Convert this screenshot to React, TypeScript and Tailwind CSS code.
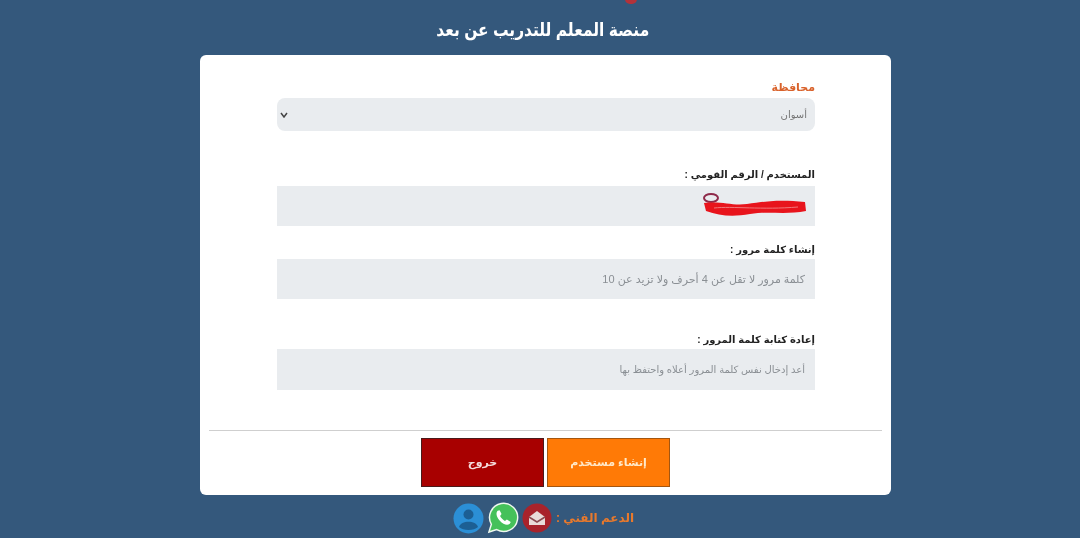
const fontStack = { fontFamily: '"Liberation Sans", "DejaVu Sans", sans-serif' };

const Field = ({
  label,
  hint,
  className,
  hintClass,
}: {
  label: string;
  hint?: string;
  className: string;
  hintClass: string;
}) => (
  <div className={className}>
    <label className="block h-[18px] text-[10px] leading-[17px] font-bold text-[#222]">
      {label}
    </label>
    <div className={`flex items-center bg-[#e9ecef] pr-[10px] text-[#8a8f94] ${hintClass}`}>
      {hint}
    </div>
  </div>
);

const Scribble = () => (
  <svg
    className="absolute left-[425px] top-[5px]"
    width="106"
    height="28"
    viewBox="0 0 106 28"
    fill="none"
  >
    <ellipse cx="9" cy="7" rx="7" ry="4" stroke="#8e2a4a" strokeWidth="2" />
    <path
      d="M2 12 C20 10 30 15 45 13 S75 8 103 11 L104 20 C85 24 65 20 48 23 S18 25 4 20 Z"
      fill="#e8141c"
    />
    <path d="M12 17 C30 15 60 19 96 16" stroke="#f0777a" strokeWidth="1" />
  </svg>
);

const SupportIcons = () => (
  <div className="flex items-center gap-[3px]">
    <svg width="31" height="31" viewBox="0 0 31 31">
      <circle cx="15.5" cy="15.5" r="15" fill="#2b8fd6" />
      <circle cx="15.5" cy="11.5" r="5" fill="#1c5f94" />
      <path d="M6 24 C8 17 23 17 25 24 C21 28 10 28 6 24 Z" fill="#1c5f94" />
    </svg>
    <svg width="32" height="32" viewBox="0 0 33 33">
      <path
        d="M2 31 L4.5 23 A14.5 14.5 0 1 1 10 28.5 Z"
        fill="#45c15a"
        stroke="#eef8ee"
        strokeWidth="1.5"
      />
      <path
        d="M11 9 C9 11 9.5 15 13 19 C17 23.5 21 24.5 23.5 22.5 L24.5 20.5 L20.5 18 L18.5 19.5 C16.5 18.5 14.5 16.5 13.5 14.5 L15 12.5 L13 8.5 Z"
        fill="#ffffff"
      />
    </svg>
    <svg width="30" height="30" viewBox="0 0 30 30">
      <circle cx="15" cy="15" r="14.5" fill="#a8232b" />
      <path d="M7 14 L15 8 L23 14 V22 H7 Z" fill="#e9dcd9" />
      <path d="M7 14 L15 19 L23 14" fill="none" stroke="#8b4a50" strokeWidth="1.5" />
    </svg>
  </div>
);

const App = () => {
  return (
    <div
      dir="rtl"
      style={fontStack}
      className="relative flex h-[538px] w-[1080px] flex-col items-center overflow-hidden bg-[#34587c] blur-[0.4px]"
    >
      <div className="absolute left-[625px] top-[-6px] h-[10px] w-[12px] rounded-full bg-[#b3323a]" />

      <h1 className="mt-[18px] ml-[6px] h-[25px] scale-x-[0.86] text-[18px] leading-[25px] font-bold text-white">
        منصة المعلم للتدريب عن بعد
      </h1>

      <div className="mt-[12px] ml-[11px] h-[440px] w-[691px] rounded-[6px] bg-white px-[9px] pt-[23px]">
        <div className="mr-[67px] ml-[68px]">
          <label className="block h-[20px] text-[11px] leading-[18px] font-bold text-[#d9622b]">
            محافظة
          </label>
          <div className="flex h-[33px] items-center justify-between rounded-[8px] bg-[#e9ecef] px-[2px] text-[10px] text-[#777]">
            <span className="mr-[6px]">أسوان</span>
            <svg width="8" height="6" viewBox="0 0 8 6" className="ml-[1px]">
              <path d="M1 1 L4 5 L7 1" fill="none" stroke="#444" strokeWidth="1.5" />
            </svg>
          </div>

          <div className="relative mt-[34px]">
            <label className="block h-[21px] text-[10px] leading-[20px] font-bold text-[#222]">
              المستخدم / الرقم القومي :
            </label>
            <div className="relative h-[40px] bg-[#e9ecef]">
              <Scribble />
            </div>
          </div>

          <Field
            className="mt-[15px]"
            hintClass="h-[40px] text-[11px]"
            label="إنشاء كلمة مرور :"
            hint="كلمة مرور لا تقل عن 4 أحرف ولا تزيد عن 10"
          />
          <Field
            className="mt-[32px]"
            hintClass="h-[41px] text-[10px]"
            label="إعادة كتابة كلمة المرور :"
            hint="أعد إدخال نفس كلمة المرور أعلاه واحتفظ بها"
          />
        </div>

        <hr className="mt-[40px] border-t border-[#cfcfcf]" />

        <div className="mt-[7px] flex justify-center gap-[3px]">
          <button className="h-[49px] w-[123px] border border-[#a5560f] bg-[#ff7a06] text-[11px] font-bold text-[#ffe9c9]">
            إنشاء مستخدم
          </button>
          <button className="h-[49px] w-[123px] border border-[#4a1a1a] bg-[#a80000] text-[11px] font-bold text-[#f5dcdc]">
            خروج
          </button>
        </div>
      </div>

      <div className="mt-[7px] ml-[7px] flex items-center gap-[4px]">
        <span className="text-[12px] font-bold text-[#e8792c]">الدعم الفني :</span>
        <div dir="ltr">
          <SupportIcons />
        </div>
      </div>
    </div>
  );
};

export default App;
